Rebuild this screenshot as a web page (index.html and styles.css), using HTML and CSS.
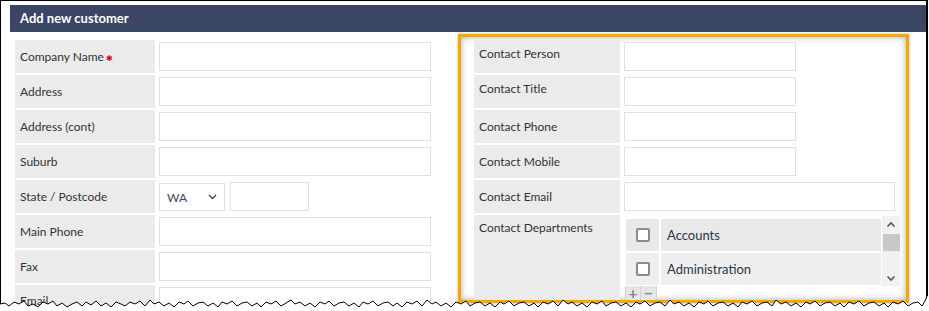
FILE: index.html
```html
<!DOCTYPE html>
<html lang="en">
<head>
    <meta charset="UTF-8">
    <title>Add new customer</title>
    <link rel="stylesheet" href="styles.css">
</head>
<body>

    <div class="shot">
        <div class="frame">
            <div class="panel">
                <div class="panel-head">Add new customer</div>

                <div class="panel-body">
                    <!-- Company details -->
                    <div class="col-left">
                        <div class="row">
                            <div class="label">Company Name<span class="req">&#10033;</span></div>
                            <div class="field"><input type="text" class="input"></div>
                        </div>
                        <div class="row">
                            <div class="label">Address</div>
                            <div class="field"><input type="text" class="input"></div>
                        </div>
                        <div class="row">
                            <div class="label">Address (cont)</div>
                            <div class="field"><input type="text" class="input"></div>
                        </div>
                        <div class="row">
                            <div class="label">Suburb</div>
                            <div class="field"><input type="text" class="input"></div>
                        </div>
                        <div class="row">
                            <div class="label">State / Postcode</div>
                            <div class="field field-split">
                                <div class="select">
                                    <span>WA</span>
                                    <svg width="9" height="6" viewBox="0 0 9 6"><path d="M1 1l3.5 3.5L8 1" fill="none" stroke="#444" stroke-width="1.3"/></svg>
                                </div>
                                <input type="text" class="input input-postcode">
                            </div>
                        </div>
                        <div class="row">
                            <div class="label">Main Phone</div>
                            <div class="field"><input type="text" class="input"></div>
                        </div>
                        <div class="row">
                            <div class="label">Fax</div>
                            <div class="field"><input type="text" class="input"></div>
                        </div>
                        <div class="row">
                            <div class="label label-email">Email</div>
                            <div class="field"><input type="text" class="input"></div>
                        </div>
                    </div>

                    <!-- Contact details (highlighted) -->
                    <div class="highlight">
                        <div class="col-right">
                            <div class="row">
                                <div class="label label-high">Contact Person</div>
                                <div class="field"><input type="text" class="input input-short"></div>
                            </div>
                            <div class="row">
                                <div class="label label-high">Contact Title</div>
                                <div class="field"><input type="text" class="input input-short"></div>
                            </div>
                            <div class="row">
                                <div class="label">Contact Phone</div>
                                <div class="field"><input type="text" class="input input-short"></div>
                            </div>
                            <div class="row">
                                <div class="label">Contact Mobile</div>
                                <div class="field"><input type="text" class="input input-short"></div>
                            </div>
                            <div class="row">
                                <div class="label">Contact Email</div>
                                <div class="field"><input type="text" class="input input-wide"></div>
                            </div>
                            <div class="row row-tall">
                                <div class="label label-top">Contact Departments</div>
                                <div class="field">
                                    <div class="dept-list">
                                        <div class="dept-items">
                                            <div class="dept">
                                                <div class="dept-check"><span class="checkbox"></span></div>
                                                <div class="dept-name">Accounts</div>
                                            </div>
                                            <div class="dept dept-alt">
                                                <div class="dept-check"><span class="checkbox"></span></div>
                                                <div class="dept-name">Administration</div>
                                            </div>
                                        </div>
                                        <div class="scrollbar">
                                            <svg width="10" height="7" viewBox="0 0 10 7"><path d="M1.5 5.5L5 2l3.5 3.5" fill="none" stroke="#555" stroke-width="1.6"/></svg>
                                            <div class="scroll-thumb"></div>
                                            <div class="scroll-space"></div>
                                            <svg width="10" height="7" viewBox="0 0 10 7"><path d="M1.5 1.5L5 5l3.5-3.5" fill="none" stroke="#555" stroke-width="1.6"/></svg>
                                        </div>
                                    </div>
                                    <div class="dept-buttons">
                                        <span class="dept-btn">+</span><span class="dept-btn">&minus;</span>
                                    </div>
                                </div>
                            </div>
                        </div>
                    </div>
                </div>
            </div>
        </div>

        <!-- torn bottom edge of the screenshot -->
        <svg class="torn" width="929" height="17" viewBox="0 0 929 17">
            <polyline class="torn-shadow" points="0,11 5,10 9,12 14,9 19,11 24,8 28,12 33,10 38,13 43,9 48,11 53,8 57,12 62,10 67,13 72,10 77,9 82,12 86,9 91,11 96,8 101,12 106,10 111,13 116,9 121,11 125,12 130,9 135,11 140,8 145,12 150,7 154,11 159,9 164,12 169,10 174,13 179,9 184,11 188,8 193,12 198,10 203,9 208,12 213,10 218,13 222,9 227,11 232,8 237,12 242,10 247,9 252,12 257,10 261,13 266,9 271,11 276,8 281,12 286,10 291,7 295,11 300,9 305,12 310,10 315,13 320,9 325,11 329,8 334,12 339,10 344,9 349,12 354,10 359,13 363,9 368,11 373,8 378,12 383,10 388,9 393,12 397,10 402,13 407,9 412,11 417,8 422,12 427,7 432,11 436,9 441,12 446,10 451,13 456,9 461,11 466,8 470,12 475,10 480,9 485,12 490,10 495,13 500,9 504,11 509,8 514,12 519,10 524,9 529,12 534,10 538,13 543,9 548,11 553,8 558,12 563,7 568,11 572,9 577,12 582,10 587,13 592,9 597,11 602,8 606,12 611,10 616,9 621,12 626,10 631,13 636,9 640,11 645,8 650,12 655,10 660,9 665,12 670,7 674,11 679,9 684,12 689,10 694,13 699,9 704,11 708,8 713,12 718,10 723,9 728,12 733,10 738,13 742,9 747,11 752,8 757,12 762,10 767,9 772,12 776,7 781,11 786,9 791,12 796,10 801,13 806,9 810,11 815,8 820,12 825,10 830,9 835,12 840,10 844,13 849,9 854,11 859,8 864,12 869,10 874,9 879,12 884,10 888,13 893,9 898,11 903,8 908,12 913,10 918,9 922,12 926,7 929,3"/>
            <polygon class="torn-fill" points="0,8 5,7 9,10 14,6 19,8 24,5 28,10 33,8 38,11 43,6 48,8 53,5 57,10 62,7 67,11 72,8 77,6 82,10 86,6 91,9 96,5 101,10 106,7 111,11 116,6 121,8 125,10 130,6 135,8 140,5 145,10 150,4 154,8 159,6 164,10 169,7 174,11 179,6 184,8 188,5 193,10 198,7 203,6 208,10 213,7 218,11 222,6 227,8 232,5 237,10 242,7 247,6 252,10 257,7 261,11 266,6 271,8 276,5 281,10 286,7 291,4 295,8 300,6 305,10 310,7 315,11 320,6 325,8 329,5 334,10 339,7 344,6 349,10 354,7 359,11 363,6 368,8 373,5 378,10 383,7 388,6 393,10 397,7 402,11 407,6 412,8 417,5 422,10 427,4 432,8 436,6 441,10 446,7 451,11 456,6 461,8 466,5 470,10 475,7 480,6 485,10 490,7 495,11 500,6 504,8 509,5 514,10 519,7 524,6 529,10 534,7 538,11 543,6 548,8 553,5 558,10 563,4 568,8 572,6 577,10 582,7 587,11 592,6 597,8 602,5 606,10 611,7 616,6 621,10 626,7 631,11 636,6 640,8 645,5 650,10 655,7 660,6 665,10 670,4 674,8 679,6 684,10 689,7 694,11 699,6 704,8 708,5 713,10 718,7 723,6 728,10 733,7 738,11 742,6 747,8 752,5 757,10 762,7 767,6 772,10 776,4 781,8 786,6 791,10 796,7 801,11 806,6 810,8 815,5 820,10 825,7 830,6 835,10 840,7 844,11 849,6 854,8 859,5 864,10 869,7 874,6 879,10 884,7 888,11 893,6 898,8 903,5 908,10 913,7 918,6 922,10 925,5 927,0 929,0 929,17 0,17"/>
            <polyline class="torn-line" points="0,8 5,7 9,10 14,6 19,8 24,5 28,10 33,8 38,11 43,6 48,8 53,5 57,10 62,7 67,11 72,8 77,6 82,10 86,6 91,9 96,5 101,10 106,7 111,11 116,6 121,8 125,10 130,6 135,8 140,5 145,10 150,4 154,8 159,6 164,10 169,7 174,11 179,6 184,8 188,5 193,10 198,7 203,6 208,10 213,7 218,11 222,6 227,8 232,5 237,10 242,7 247,6 252,10 257,7 261,11 266,6 271,8 276,5 281,10 286,7 291,4 295,8 300,6 305,10 310,7 315,11 320,6 325,8 329,5 334,10 339,7 344,6 349,10 354,7 359,11 363,6 368,8 373,5 378,10 383,7 388,6 393,10 397,7 402,11 407,6 412,8 417,5 422,10 427,4 432,8 436,6 441,10 446,7 451,11 456,6 461,8 466,5 470,10 475,7 480,6 485,10 490,7 495,11 500,6 504,8 509,5 514,10 519,7 524,6 529,10 534,7 538,11 543,6 548,8 553,5 558,10 563,4 568,8 572,6 577,10 582,7 587,11 592,6 597,8 602,5 606,10 611,7 616,6 621,10 626,7 631,11 636,6 640,8 645,5 650,10 655,7 660,6 665,10 670,4 674,8 679,6 684,10 689,7 694,11 699,6 704,8 708,5 713,10 718,7 723,6 728,10 733,7 738,11 742,6 747,8 752,5 757,10 762,7 767,6 772,10 776,4 781,8 786,6 791,10 796,7 801,11 806,6 810,8 815,5 820,10 825,7 830,6 835,10 840,7 844,11 849,6 854,8 859,5 864,10 869,7 874,6 879,10 884,7 888,11 893,6 898,8 903,5 908,10 913,7 918,6 922,10 925,5 927,0"/>
        </svg>
    </div>

</body>
</html>
```

FILE: styles.css
```css
/* Reset */
* {
    box-sizing: border-box;
    margin: 0;
    padding: 0;
    font-family: 'Lato', 'Liberation Sans', sans-serif;
}

body {
    background: #fff;
    color: #333;
}

/* Screenshot frame */
.shot {
    position: relative;
    width: 929px;
    height: 311px;
    overflow: hidden;
}

.frame {
    width: 928px;
    height: 308px;
    border-left: 1px solid #000;
    border-top: 1px solid #000;
    border-right: 2px solid #000;
    padding: 4px 0 0 9px;
    overflow: hidden;
}

/* Panel */
.panel-head {
    height: 27px;
    background: #3b4664;
    border-bottom: 1px solid #33515e;
    color: #fff;
    font-size: 13px;
    font-weight: bold;
    padding: 5px 0 0 10px;
}

.panel-body {
    display: flex;
    align-items: flex-start;
}

/* Rows */
.row {
    display: grid;
    grid-template-columns: 140px 272px;
    column-gap: 4px;
    height: 33px;
    margin-bottom: 2px;
}

.label {
    background: #ebebeb;
    font-size: 12px;
    color: #333;
    padding-left: 5px;
    display: flex;
    align-items: center;
}

.label-high {
    padding-bottom: 7px;
}

.label-email {
    padding-bottom: 3px;
}

.label-top {
    align-items: flex-start;
    padding-top: 5px;
}

.req {
    color: #d0021b;
    font-size: 8px;
    margin-left: 2px;
    position: relative;
    top: 1px;
}

.field {
    padding-top: 2px;
}

.field-split {
    display: flex;
    gap: 5px;
}

/* Inputs */
.input {
    display: block;
    width: 100%;
    height: 29px;
    border: 1px solid #e0e0e0;
    background: #fff;
    outline: none;
}

.input-short {
    width: 172px;
}

.input-wide {
    width: 271px;
}

.input-postcode {
    width: 79px;
}

.select {
    width: 66px;
    height: 28px;
    margin-top: 1px;
    border: 1px solid #e0e0e0;
    background: #fff;
    display: flex;
    align-items: center;
    justify-content: space-between;
    padding: 0 7px 0 7px;
    font-size: 12px;
    color: #3b4664;
}

/* Left column */
.col-left {
    margin: 8px 0 0 5px;
    width: 416px;
}

/* Orange highlight around contact section */
.highlight {
    margin: 2px 0 0 27px;
    width: 451px;
    height: 269px;
    border: 3px solid #f7a800;
    box-shadow: inset 0 0 6px rgba(0, 0, 0, 0.35), 0 0 3px rgba(0, 0, 0, 0.3);
    padding: 3px 0 0 13px;
    overflow: hidden;
}

.col-right .row {
    grid-template-columns: 146px 280px;
}

.col-right .row-tall {
    height: 90px;
}

/* Departments list */
.dept-list {
    display: flex;
    width: 276px;
    height: 70px;
    background: #fff;
    margin-top: -1px;
}

.dept-items {
    flex: 1;
    padding: 3px 1px 0 2px;
    display: flex;
    flex-direction: column;
    gap: 2px;
}

.dept {
    display: flex;
    gap: 2px;
    height: 32px;
}

.dept-check {
    width: 33px;
    background: #e9e9e9;
    display: flex;
    align-items: center;
    justify-content: center;
}

.dept-name {
    flex: 1;
    background: #e9e9e9;
    font-size: 13px;
    color: #2d3648;
    padding-left: 6px;
    display: flex;
    align-items: center;
}

.dept-alt .dept-check,
.dept-alt .dept-name {
    background: #efefef;
}

.checkbox {
    width: 14px;
    height: 14px;
    border: 2px solid #8b8898;
    border-radius: 2px;
    background: #fff;
}

.scrollbar {
    width: 18px;
    background: #f1f1f1;
    display: flex;
    flex-direction: column;
    align-items: center;
    padding: 5px 0 4px;
}

.scroll-thumb {
    width: 17px;
    height: 17px;
    background: #c8c8c8;
    margin-top: 6px;
}

.scroll-space {
    flex: 1;
}

.dept-buttons {
    display: flex;
    margin-left: 1px;
}

.dept-btn {
    width: 16px;
    height: 15px;
    background: #e6e6e6;
    border: 1px solid #d4d4d4;
    border-top: none;
    color: #888;
    font-size: 16px;
    font-weight: bold;
    line-height: 13px;
    text-align: center;
}

.dept-btn:first-child {
    border-radius: 0 0 0 3px;
}

.dept-btn:last-child {
    border-left: none;
    border-radius: 0 0 3px 0;
}

/* Torn edge overlay */
.torn {
    position: absolute;
    left: 0;
    top: 296px;
}

.torn-fill {
    fill: #fff;
}

.torn-shadow {
    fill: none;
    stroke: #bbb;
    stroke-width: 2;
}

.torn-line {
    fill: none;
    stroke: #000;
    stroke-width: 1;
}
```
